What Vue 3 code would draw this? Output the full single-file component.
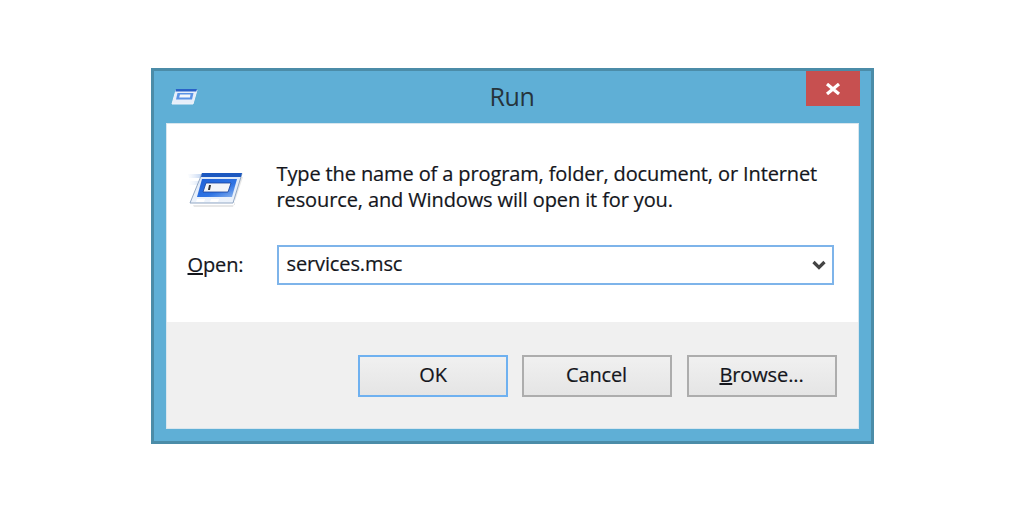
<template>
  <div class="page">
    <div class="window">
      <header class="titlebar">
        <div class="title-left">
          <svg class="small-icon" viewBox="0 0 28 18" width="28" height="18">
            <path d="M6 2H27L23 16H2Z" fill="#e6eefa" stroke="#eef4fb" stroke-width="1"/>
            <path d="M6 1H27L26.3 3.6H5.3Z" fill="#2a62c8"/>
            <path d="M7.5 5H23.5L22 11.5H6Z" fill="#5b93e6"/>
            <path d="M10 6.5H20.5L20 9.5H9.2Z" fill="#f4f7fb"/>
          </svg>
        </div>
        <div class="title">Run</div>
        <div class="title-right">
          <button class="close" aria-label="Close">
            <svg viewBox="0 0 16 12" width="16" height="12">
              <path d="M2 1L14 11M14 1L2 11" stroke="#fff" stroke-width="3.2" fill="none"/>
            </svg>
          </button>
        </div>
      </header>
      <div class="client">
        <section class="main">
          <div class="intro">
            <svg class="big-icon" viewBox="0 0 56 40" width="56" height="40">
              <defs>
                <linearGradient id="fade" x1="0" x2="1" y1="0" y2="0">
                  <stop offset="0" stop-color="#dbe6f7" stop-opacity="0.1"/>
                  <stop offset="1" stop-color="#b9cff0"/>
                </linearGradient>
                <linearGradient id="body" x1="0" x2="0" y1="0" y2="1">
                  <stop offset="0" stop-color="#dbe7f8"/>
                  <stop offset="1" stop-color="#eef4fc"/>
                </linearGradient>
                <linearGradient id="frame" x1="0" x2="1" y1="0" y2="1">
                  <stop offset="0" stop-color="#1d5fd6"/>
                  <stop offset="0.6" stop-color="#2f74e4"/>
                  <stop offset="1" stop-color="#8fb6ee"/>
                </linearGradient>
              </defs>
              <path d="M47 6L48 33H6L7 35H46L56 5Z" fill="#a8a8a8" opacity="0.28"/>
              <path d="M1 2H16L14 6H2Z" fill="url(#fade)"/>
              <path d="M3 9H13L11 13H2Z" fill="url(#fade)" opacity="0.55"/>
              <path d="M15 1.5H55L46 31H3Z" fill="url(#body)" stroke="#93a8c4" stroke-width="1"/>
              <path d="M15 1H55L53.8 5H14Z" fill="#1c58c0"/>
              <path d="M15 7H50L45 25H10Z" fill="url(#frame)"/>
              <path d="M19 11H44L41 20H16Z" fill="#f3f5f9" stroke="#16409a" stroke-width="0.8"/>
              <path d="M22 13H24L23 18H21Z" fill="#333"/>
              <path d="M10 27H18L17 30H9ZM24 27H32L31 30H23Z" fill="#fff"/>
            </svg>
            <p class="message">Type the name of a program, folder, document, or Internet<br>resource, and Windows will open it for you.</p>
          </div>
          <div class="open-row">
            <label class="open-label"><u>O</u>pen:</label>
            <div class="combo">
              <span class="combo-value">services.msc</span>
              <svg viewBox="0 0 14 10" width="14" height="10">
                <path d="M1.5 2L7 7.5L12.5 2" stroke="#444" stroke-width="3.2" fill="none"/>
              </svg>
            </div>
          </div>
        </section>
        <footer class="actions">
          <button class="btn default">OK</button>
          <button class="btn">Cancel</button>
          <button class="btn"><u>B</u>rowse...</button>
        </footer>
      </div>
    </div>
  </div>
</template>

<script setup>
</script>

<style>
html, body { margin: 0; background: #fff; }
</style>

<style scoped>
.page {
  width: 1024px;
  height: 512px;
  box-sizing: border-box;
  display: flex;
  justify-content: center;
  padding-top: 68px;
  background: #fff;
  font-family: "Open Sans", "Noto Sans", sans-serif;
  color: #14161c;
}
.window {
  width: 723px;
  height: 376px;
  box-sizing: border-box;
  background: #5fafd6;
  border: 3px solid #4b8ca8;
  padding: 0 13px 13px;
  display: flex;
  flex-direction: column;
}
.titlebar {
  height: 53px;
  flex: none;
  display: grid;
  grid-template-columns: 1fr auto 1fr;
  align-items: start;
}
.title-left { padding: 17px 0 0 3px; }
.small-icon { display: block; }
.title {
  font-size: 25px;
  line-height: 50px;
  color: #26343c;
  letter-spacing: -0.4px;
}
.title-right { display: flex; justify-content: flex-end; margin-right: -2px; }
.close {
  width: 54px;
  height: 35px;
  padding: 0;
  border: 0;
  background: #c75050;
  display: flex;
  align-items: center;
  justify-content: center;
}
.client {
  flex: 1;
  display: flex;
  flex-direction: column;
  background: #fff;
  outline: 1px solid #d8e6ee;
}
.main {
  height: 198px;
  flex: none;
  box-sizing: border-box;
  padding: 37px 24px 0 21px;
}
.intro { display: flex; align-items: flex-start; }
.big-icon { flex: none; margin: 11px 34px 0 -1px; display: block; width: 56px; }
.message {
  margin: 0;
  font-size: 20px;
  line-height: 26px;
  white-space: nowrap;
  letter-spacing: -0.12px;
  -webkit-text-stroke: 0.2px currentColor;
}
.open-row { display: flex; align-items: center; margin-top: 32px; }
.open-label {
  width: 89px;
  font-size: 20px;
  letter-spacing: -0.12px;
  padding-bottom: 2px;
  -webkit-text-stroke: 0.2px currentColor;
}
.combo {
  flex: 1;
  height: 40px;
  box-sizing: border-box;
  border: 2px solid #7eb4ea;
  display: flex;
  align-items: center;
  justify-content: space-between;
  padding: 0 6px 0 8px;
  font-size: 20px;
  letter-spacing: -0.12px;
  -webkit-text-stroke: 0.2px currentColor;
}
.combo-value { padding-bottom: 4px; }
.actions {
  flex: 1;
  background: #f0f0f0;
  display: flex;
  justify-content: flex-end;
  align-items: flex-start;
  gap: 15px;
  padding: 33px 21px 0 0;
}
.btn {
  width: 150px;
  height: 42px;
  box-sizing: border-box;
  border: 2px solid #adadad;
  background: linear-gradient(#f0f0f0, #e5e5e5);
  font: inherit;
  font-size: 20px;
  letter-spacing: -0.12px;
  color: #14161c;
  padding: 0 0 4px;
  -webkit-text-stroke: 0.2px currentColor;
}
.btn.default { border-color: #6fb1f0; margin-right: -1px; padding-left: 1px; }
</style>
